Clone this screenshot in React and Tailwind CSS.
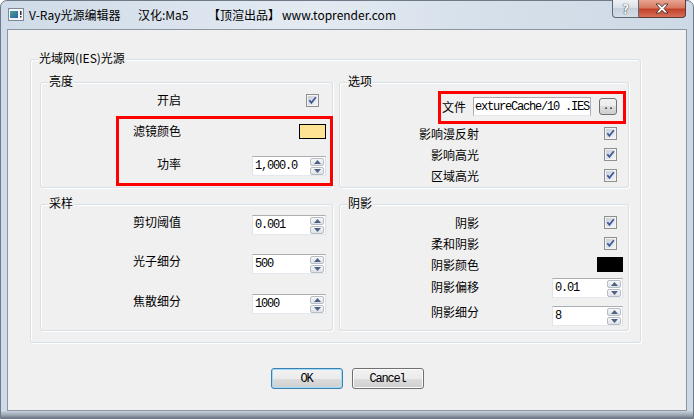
import React from "react";

// Win7-style "V-Ray光源编辑器" dialog
const cjk = "font-['Noto_Sans_CJK_SC','Noto_Sans',sans-serif]";
const mono = "font-['Liberation_Mono','DejaVu_Sans_Mono',monospace] text-[12px] tracking-[-1.2px]";

const AppIcon = () => (
  <svg width="16" height="13" viewBox="0 0 16 13" className="block">
    <defs>
      <linearGradient id="ic" x1="0" y1="0" x2="1" y2="1">
        <stop offset="0" stopColor="#4aa58c" />
        <stop offset="1" stopColor="#2a5fa8" />
      </linearGradient>
    </defs>
    <rect x="0.5" y="0.5" width="15" height="12" fill="#f3f5f7" stroke="#7d8a99" />
    <rect x="2" y="3" width="8" height="7" fill="url(#ic)" />
    <rect x="12" y="3" width="1.5" height="4" fill="#333" />
    <rect x="12" y="8" width="1.5" height="1.5" fill="#333" />
  </svg>
);

const Check = () => (
  <svg width="13" height="13" viewBox="0 0 13 13" className="block">
    <defs>
      <linearGradient id="cb" x1="0" y1="0" x2="1" y2="1">
        <stop offset="0" stopColor="#c9ced6" />
        <stop offset="1" stopColor="#f3f4f5" />
      </linearGradient>
    </defs>
    <rect x="0.5" y="0.5" width="12" height="12" fill="#f4f4f4" stroke="#8e8f8f" />
    <rect x="2" y="2" width="9" height="9" fill="url(#cb)" />
    <path d="M3.3 6.2 L5.4 8.9 L9.8 3.2" fill="none" stroke="#3d5a9b" strokeWidth="1.8" />
  </svg>
);

const Arrow = ({ up }) => (
  <div className="flex h-[8px] w-[14px] items-center justify-center rounded-[2px] border border-[#b7bdc5] bg-[linear-gradient(#f7f7f7,#dde1e6)]">
    <svg width="7" height="4" viewBox="0 0 7 4" className="block">
      <path d={up ? "M0 4 L3.5 0 L7 4Z" : "M0 0 L3.5 4 L7 0Z"} fill="#4d6185" />
    </svg>
  </div>
);

const SpinBox = ({ value, w }) => (
  <div className={`flex h-[20px] items-center border border-[#abadb3] border-b-[#e3e9ef] border-l-[#e2e3ea] border-r-[#dbdfe6] bg-white ${w}`}>
    <div className={`flex-1 pl-[2px] text-black ${mono}`}>{value}</div>
    <div className="mr-[1px] flex flex-col gap-[1px]">
      <Arrow up />
      <Arrow />
    </div>
  </div>
);

const GroupBox = ({ title, className, children }) => (
  <div className={`relative rounded-[3px] border border-[#d5dfe5] shadow-[inset_1px_1px_0_#ffffff,1px_1px_0_#ffffff] ${className}`}>
    <span className="absolute -top-[10px] left-[7px] bg-[#f0f0f0] px-[1px] text-[12px] leading-[16px]">{title}</span>
    {children}
  </div>
);

const Label = ({ children, w, extra = "" }) => (
  <div className={`text-right text-[12px] leading-[16px] ${w} ${extra}`}>{children}</div>
);

const WinButton = ({ children, focused }) => (
  <button
    className={`h-[21px] w-[72px] rounded-[3px] border bg-[linear-gradient(#f2f2f2,#ebebeb_50%,#dddddd_50%,#cfcfcf)] text-black ${mono} ${
      focused
        ? "border-[#3c7fb1] shadow-[inset_0_0_0_1px_#9fdcf8]"
        : "border-[#707070] shadow-[inset_0_0_0_1px_#fbfbfb]"
    }`}
  >
    {children}
  </button>
);

export default function App() {
  return (
    <div className={`h-[419px] w-[694px] overflow-hidden text-black ${cjk}`}>
      <div className="flex h-full w-full flex-col rounded-t-[7px] border border-[#6f7987] bg-[linear-gradient(90deg,#cfdbe8,#e3eaf2_45%,#d6e0ea_70%,#cdd9e6)]">
        {/* title bar */}
        <div className="flex h-[28px] shrink-0">
          <div className="ml-[7px] mt-[7px]">
            <AppIcon />
          </div>
          <div className="ml-[5px] mt-[6px] flex whitespace-nowrap text-[12px] leading-[16px]">
            <span className="w-[109px]">V-Ray光源编辑器</span>
            <span className="w-[70px]">汉化:Ma5</span>
            <span className="w-[74px]">【顶渲出品】</span>
            <span>www.toprender.com</span>
          </div>
          <div className="ml-auto mr-[7px] -mt-[1px] flex h-[18px]">
            <div className="flex w-[27px] items-center justify-center rounded-bl-[4px] border border-t-0 border-[#5e6772] bg-[linear-gradient(#eef2f6,#d7dee7_50%,#c6d0dc_50%,#d6dee8)] text-[13px] font-bold leading-none text-white [text-shadow:0_0_1px_#333,0_0_1px_#333]">
              ?
            </div>
            <div className="flex w-[47px] items-center justify-center rounded-br-[4px] border border-l-0 border-t-0 border-[#5e3a33] bg-[linear-gradient(#e8a593,#d77a62_45%,#c2412a_55%,#d6705a)]">
              <svg width="14" height="11" viewBox="0 0 14 11" className="block">
                <path d="M1 1 L4.5 1 L7 3.8 L9.5 1 L13 1 L9 5.5 L13 10 L9.5 10 L7 7.2 L4.5 10 L1 10 L5 5.5Z" fill="#ffffff" stroke="#4a2a24" strokeWidth="0.9" />
              </svg>
            </div>
          </div>
        </div>

        {/* client area */}
        <div className="mx-[6px] flex h-[382px] shrink-0 flex-col border border-[#8c96a1] bg-[#f0f0f0]">
          <div className="ml-[22px] mt-[29px]">
            <GroupBox title="光域网(IES)光源" className="h-[284px] w-[611px]">
              <div className="flex gap-[6px] pl-[9px] pt-[22px]">
                {/* left column */}
                <div className="flex flex-col gap-[16px]">
                  <GroupBox title="亮度" className="h-[106px] w-[293px]">
                    <div className="pt-[7px]">
                      <div className="flex h-[20px] items-center">
                        <Label w="w-[140px]">开启</Label>
                        <div className="ml-auto mr-[13px]"><Check /></div>
                      </div>
                      <div className="mt-[11px] flex h-[20px] items-center">
                        <Label w="w-[140px]">滤镜颜色</Label>
                        <div className="ml-auto mr-[6px] h-[15px] w-[27px] border border-black bg-[#ffe394]" />
                      </div>
                      <div className="mt-[15px] flex h-[20px] items-center">
                        <Label w="w-[140px]" extra="mb-[4px]">功率</Label>
                        <div className="ml-auto mr-[6px]"><SpinBox value="1,000.0" w="w-[74px]" /></div>
                      </div>
                    </div>
                    <div className="absolute left-[75px] top-[33px] h-[70px] w-[217px] border-[3px] border-[#ff0000]" />
                  </GroupBox>

                  <GroupBox title="采样" className="h-[127px] w-[293px]">
                    <div className="pt-[10px]">
                      <div className="flex h-[20px] items-center">
                        <Label w="w-[140px]" extra="mb-[6px]">剪切阈值</Label>
                        <div className="ml-auto mr-[6px]"><SpinBox value="0.001" w="w-[74px]" /></div>
                      </div>
                      <div className="mt-[19px] flex h-[20px] items-center">
                        <Label w="w-[140px]" extra="mb-[6px]">光子细分</Label>
                        <div className="ml-auto mr-[6px]"><SpinBox value="500" w="w-[74px]" /></div>
                      </div>
                      <div className="mt-[20px] flex h-[20px] items-center">
                        <Label w="w-[140px]" extra="mb-[6px]">焦散细分</Label>
                        <div className="ml-auto mr-[6px]"><SpinBox value="1000" w="w-[74px]" /></div>
                      </div>
                    </div>
                  </GroupBox>
                </div>

                {/* right column */}
                <div className="flex flex-col gap-[16px]">
                  <GroupBox title="选项" className="h-[106px] w-[290px]">
                    <div className="pt-[14px]">
                      <div className="flex h-[19px] items-center">
                        <Label w="w-[126px]">文件</Label>
                        <div className={`ml-[7px] flex h-[19px] w-[118px] items-center overflow-hidden whitespace-nowrap border border-[#abadb3] border-b-[#e3e9ef] bg-white pl-[1px] ${mono}`}>
                          extureCache/10 .IES
                        </div>
                        <div className="ml-[8px] flex h-[17px] w-[18px] items-end justify-center rounded-[3px] border border-[#707070] bg-[linear-gradient(#f2f2f2,#ebebeb_50%,#dddddd_50%,#cfcfcf)] pb-[2px] font-['Liberation_Mono',monospace] text-[10px] leading-[10px] tracking-[-1px]">
                          ..
                        </div>
                      </div>
                      <div className="mt-[7px]">
                        {["影响漫反射", "影响高光", "区域高光"].map((t) => (
                          <div key={t} className="flex h-[21px] items-center">
                            <Label w="w-[139px]">{t}</Label>
                            <div className="ml-auto mr-[11px]"><Check /></div>
                          </div>
                        ))}
                      </div>
                    </div>
                    <div className="absolute left-[98px] top-[8px] h-[33px] w-[188px] border-[3px] border-[#ff0000]" />
                  </GroupBox>

                  <GroupBox title="阴影" className="h-[127px] w-[290px]">
                    <div className="pt-[7px]">
                      <div className="flex h-[21px] items-center">
                        <Label w="w-[139px]">阴影</Label>
                        <div className="ml-auto mr-[11px]"><Check /></div>
                      </div>
                      <div className="flex h-[21px] items-center">
                        <Label w="w-[139px]">柔和阴影</Label>
                        <div className="ml-auto mr-[11px]"><Check /></div>
                      </div>
                      <div className="flex h-[21px] items-center">
                        <Label w="w-[139px]">阴影颜色</Label>
                        <div className="ml-auto mr-[5px] h-[15px] w-[26px] bg-black" />
                      </div>
                      <div className="mt-[3px] flex h-[20px] items-center">
                        <Label w="w-[139px]" extra="mb-[3px]">阴影偏移</Label>
                        <div className="ml-auto mr-[5px]"><SpinBox value="0.01" w="w-[71px]" /></div>
                      </div>
                      <div className="mt-[8px] flex h-[20px] items-center">
                        <Label w="w-[139px]" extra="mb-[9px]">阴影细分</Label>
                        <div className="ml-auto mr-[5px]"><SpinBox value="8" w="w-[71px]" /></div>
                      </div>
                    </div>
                  </GroupBox>
                </div>
              </div>
            </GroupBox>
          </div>

          <div className="mt-[25px] flex justify-center gap-[9px]">
            <WinButton focused>OK</WinButton>
            <WinButton>Cancel</WinButton>
          </div>
        </div>

        {/* bottom frame */}
        <div className="flex-1 bg-[linear-gradient(#c8d3df,#9aa5b1_60%,#6e7884)]" />
      </div>
    </div>
  );
}
